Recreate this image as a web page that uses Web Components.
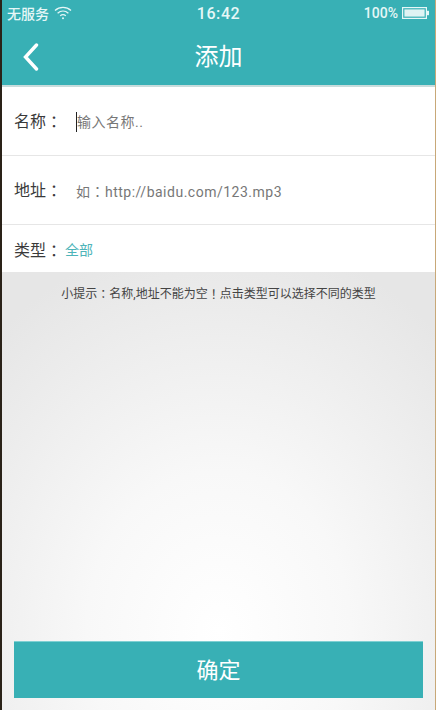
<!DOCTYPE html>
<html>
<head>
<meta charset="utf-8">
<style>
  html, body { margin: 0; height: 100%; }
  body { font-family: Roboto, "Noto Sans CJK SC", sans-serif; background: #fff; }
  /* TC font centres the full-width punctuation, like the reference */
  .p { font-family: "Noto Sans CJK TC", sans-serif; }
</style>
</head>
<body>
<add-page>
  <app-header slot="top" title="添加"></app-header>
  <form-row slot="top" label="名称：" height="68"><span style="color:#777">输入名称..</span></form-row>
  <form-row slot="top" label="地址：" height="68"><span style="color:#777">如<span class="p">：</span>http://baidu.com/123.mp3</span></form-row>
  <type-row slot="top" label="类型：" value="全部"></type-row>
  <hint-panel text="小提示：名称,地址不能为空！点击类型可以选择不同的类型" action="确定"></hint-panel>
</add-page>

<script>
  const punct = s => s.replace(/[：！]/g, m => `<span style="font-family:'Noto Sans CJK TC',sans-serif;position:relative;top:1px">${m}</span>`);

  class AddPage extends HTMLElement {
    constructor() {
      super();
      this.attachShadow({mode: 'open'});
      this.shadowRoot.innerHTML = `
        <style>
          :host { display: flex; flex-direction: column; box-sizing: border-box; height: 710px; width: 436px;
                  border-left: 2px solid; border-image: linear-gradient(90deg, #2a2218 50%, #c8a878 50%) 1; border-right: 1px solid #222; overflow: hidden; }
          .top { display: block; }
          .rest { flex: 1; display: flex; min-height: 0; }
        </style>
        <div class="top"><slot name="top"></slot></div>
        <div class="rest"><slot></slot></div>`;
    }
  }

  class AppHeader extends HTMLElement {
    constructor() {
      super();
      this.attachShadow({mode: 'open'});
      this.shadowRoot.innerHTML = `
        <style>
          :host { display: block; background: #38b0b5; color: #fff; border-bottom: 2px solid; border-image: linear-gradient(#8cc3c6 50%, #c8dcdc 50%) 1; }
          .status { height: 26px; display: flex; align-items: center; padding: 0 6px 0 5px; font-size: 14px; font-weight: 500; color: #e6f7f7; position: relative; }
          .status svg { display: block; }
          .left { display: flex; align-items: center; gap: 5px; }
          .time { position: absolute; left: 0; right: 0; text-align: center; font-size: 16px; font-weight: 500; letter-spacing: .6px; }
          .right { margin-left: auto; display: flex; align-items: center; gap: 4px; font-size: 14px; }
          .bar { height: 59px; display: flex; align-items: center; justify-content: center; position: relative; }
          .title { font-size: 24px; padding-bottom: 2px; }
          .back { position: absolute; left: 20px; top: 17px; }
        </style>
        <div class="status">
          <span class="left">无服务
            <svg width="18" height="14" viewBox="0 0 18 14" fill="none" stroke="#e6f7f7" stroke-width="1.3">
              <path d="M1 4.6C5.6.4 12.4.4 17 4.6"/><path d="M3.6 7.2c3.2-2.8 7.6-2.8 10.8 0"/><path d="M6.2 9.8c1.7-1.4 3.9-1.4 5.6 0"/><circle cx="9" cy="12.3" r="1" fill="#e6f7f7" stroke="none"/>
            </svg>
          </span>
          <span class="time">16:42</span>
          <span class="right">100%
            <svg width="27" height="12" viewBox="0 0 27 12">
              <rect x=".6" y=".6" width="23.8" height="10.8" fill="none" stroke="#e6f7f7" stroke-width="1.2"/>
              <rect x="2.4" y="2.4" width="20.2" height="7.2" fill="#dff3f3"/>
              <rect x="25" y="3.8" width="2" height="4.4" fill="#e6f7f7"/>
            </svg>
          </span>
        </div>
        <div class="bar">
          <svg class="back" width="18" height="28" viewBox="0 0 18 28" fill="none" stroke="#fff" stroke-width="3.4" stroke-linecap="round" stroke-linejoin="miter">
            <path d="M14.5 2 3.5 14 14.5 26"/>
          </svg>
          <span class="title">${this.getAttribute('title')}</span>
        </div>`;
    }
  }

  class FormRow extends HTMLElement {
    constructor() {
      super();
      this.attachShadow({mode: 'open'});
    }
    connectedCallback() {
      this.shadowRoot.innerHTML = `
        <style>
          :host { display: flex; align-items: center; height: ${this.getAttribute('height')}px; border-bottom: 1px solid #e6e6e6; padding-left: 12px; }
          .label { width: 62px; font-size: 16px; color: #3a3a3a; padding-bottom: 2px; }
          .input { font-size: 14px; line-height: 20px; letter-spacing: .5px; position: relative; top: 1px; }
          :host(.focused) .input { border-left: 1px solid #222; }
        </style>
        <span class="label">${punct(this.getAttribute('label'))}</span>
        <span class="input"><slot></slot></span>`;
    }
  }

  class TypeRow extends HTMLElement {
    constructor() {
      super();
      this.attachShadow({mode: 'open'});
      this.shadowRoot.innerHTML = `
        <style>
          :host { display: flex; align-items: center; height: 47px; padding-left: 12px; font-size: 16px; color: #3a3a3a; }
          .value { color: #4db4b9; font-size: 14px; margin-left: 3px; }
        </style>
        <span>${punct(this.getAttribute('label'))}</span><span class="value">${this.getAttribute('value')}</span>`;
    }
  }

  class HintPanel extends HTMLElement {
    constructor() {
      super();
      this.attachShadow({mode: 'open'});
      this.shadowRoot.innerHTML = `
        <style>
          :host { flex: 1; display: flex; flex-direction: column; background: radial-gradient(ellipse 330px 400px at 50% 82%, #fff 0%, #f8f8f8 40%, #e6e6e6 100%); }
          .hint { text-align: center; font-size: 12px; color: #444; padding: 14px 0 0 0; line-height: 14px; }
          button { all: unset; display: block; box-sizing: border-box; margin: auto 12px 12px 12px; height: 57px; padding-bottom: 4px; background: #38b0b5; color: #fff; font: inherit; font-size: 22px; text-align: center; border-top: 1px solid #7fd0d3; }
        </style>
        <div class="hint">${punct(this.getAttribute('text'))}</div>
        <button>${this.getAttribute('action')}</button>`;
    }
  }

  customElements.define('add-page', AddPage);
  customElements.define('app-header', AppHeader);
  customElements.define('form-row', FormRow);
  customElements.define('type-row', TypeRow);
  customElements.define('hint-panel', HintPanel);
  document.querySelector('form-row').classList.add('focused');
</script>
</body>
</html>
